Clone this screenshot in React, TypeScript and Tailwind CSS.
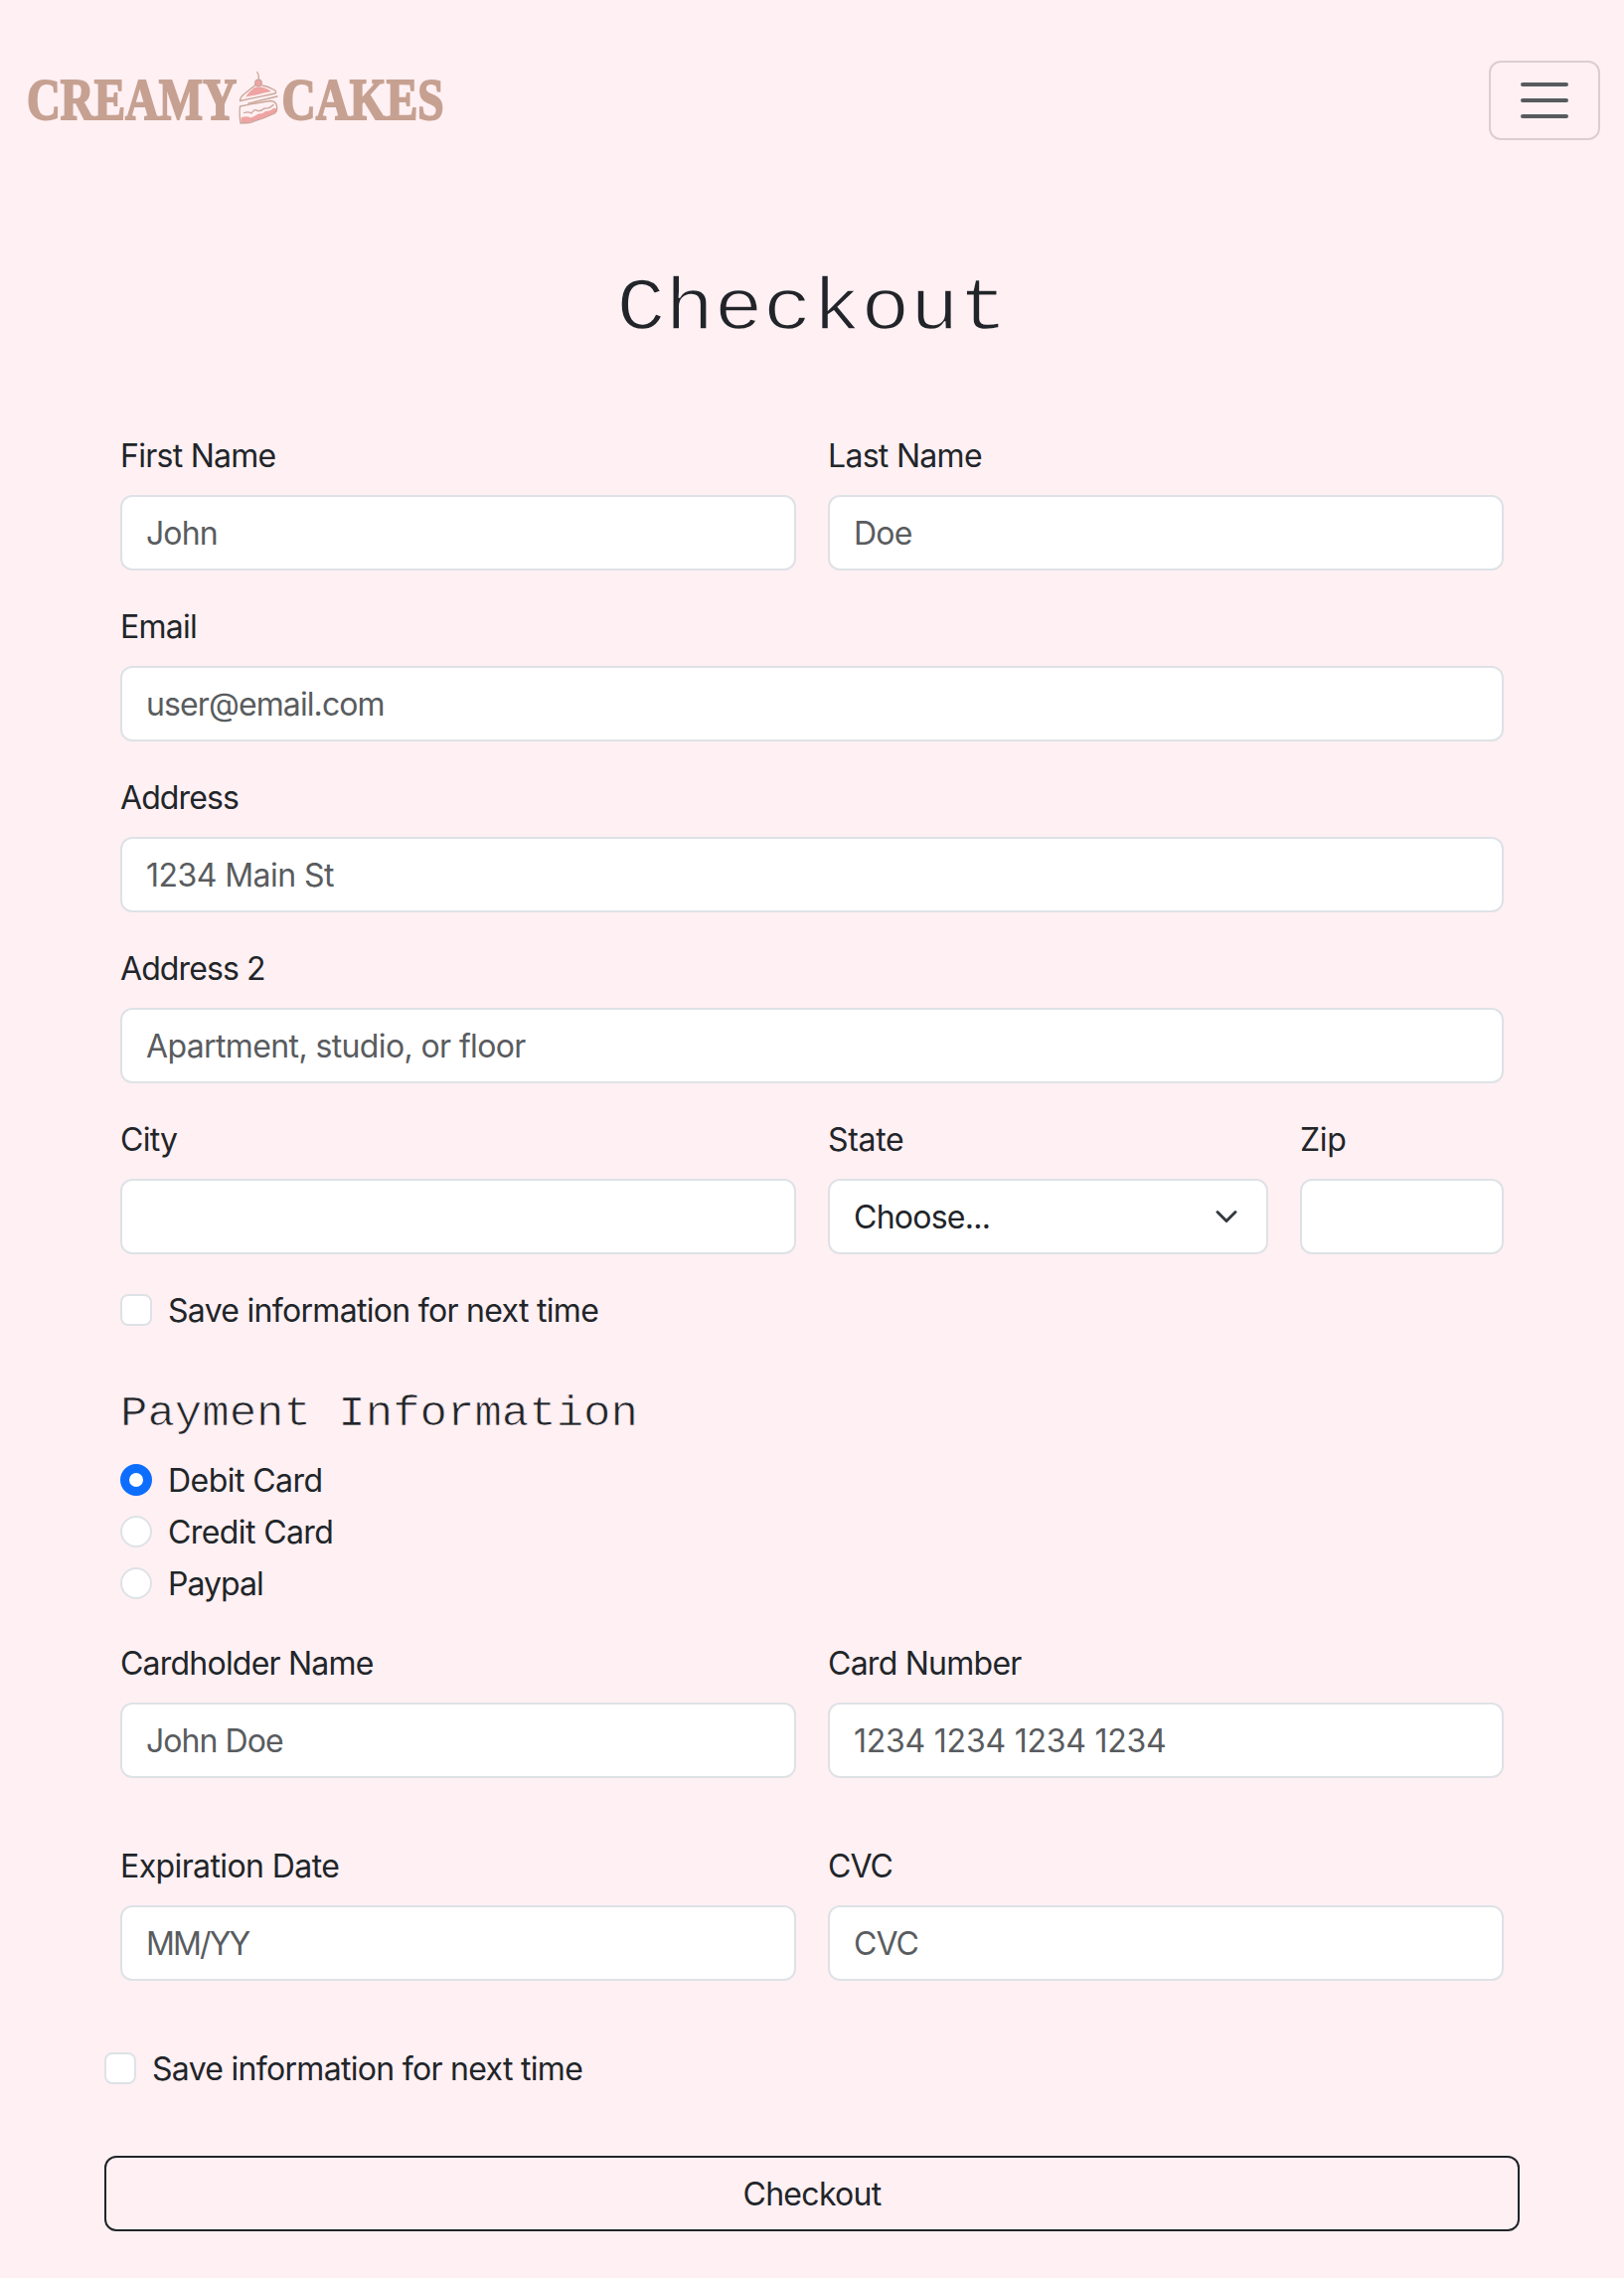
import React from "react";

type FieldProps = { label: string; placeholder?: string; labelClass?: string; inputClass?: string };

function Field({ label, placeholder, labelClass = "", inputClass = "" }: FieldProps) {
  return (
    <label className="flex min-w-0 flex-col gap-4">
      <span className={`h-12 whitespace-nowrap leading-[49px] ${labelClass}`}>{label}</span>
      <input
        type="text"
        placeholder={placeholder}
        className={`h-[76px] w-full rounded-xl border-2 border-[#dee2e6] bg-white px-6 text-[#212529] placeholder:text-[#595c5f] placeholder:opacity-100 ${inputClass}`}
      />
    </label>
  );
}

function Check({ label }: { label: string }) {
  return (
    <label className="flex h-12 items-center gap-4">
      <input type="checkbox" className="size-8 appearance-none rounded-lg border-2 border-[#dee2e6] bg-white" />
      <span className="whitespace-nowrap pt-0.5 leading-[48px] tracking-[-0.7px]">{label}</span>
    </label>
  );
}

function Radio({ label, checked, labelClass }: { label: string; checked?: boolean; labelClass: string }) {
  return (
    <label className="flex h-12 items-center gap-4">
      <input
        type="radio"
        name="payment"
        defaultChecked={checked}
        className="size-8 appearance-none rounded-full border-2 border-[#dee2e6] bg-white checked:border-[9px] checked:border-[#0d6efd]"
      />
      <span className={`whitespace-nowrap pt-px leading-[48px] ${labelClass}`}>{label}</span>
    </label>
  );
}

function Logo() {
  return (
    <svg width="480" height="100" viewBox="0 0 480 100" className="overflow-visible">
      <g fill="#c6a192" stroke="#c6a192" strokeWidth="2" fontFamily="Liberation Serif, serif" fontWeight="700" fontSize="58.5">
        <text x="27" y="69.500" textLength="211" lengthAdjust="spacingAndGlyphs">CREAMY</text>
        <text x="283.500" y="69.500" textLength="163" lengthAdjust="spacingAndGlyphs">CAKES</text>
      </g>
      <g fill="none" stroke="#c9a699" strokeWidth="1.3" strokeLinecap="round" strokeLinejoin="round">
        <path d="M247 47.500 Q250 43 256 38 Q265 36 273 42 Q266 43 258 45.500 Z" fill="#efa3a3" stroke="none" />
        <path d="M257 35.500 L244 46 Q241 49.500 241.500 51.500 L277 44 Q279 42 275 40 Q270 37 264 36" />
        <circle cx="260" cy="33.500" r="3.300" fill="#efa3a3" />
        <path d="M260.300 30 Q261 26 258.800 22.500" />
        <path d="M250 54 L279 47" />
        <path d="M242.500 68.500 Q248 66 252 68.500 Q256 67 260 64.500 Q264 65 267 62 Q272 62 275 59 L278.500 59 V62.500 Q264 71 250 73 L242.500 73.500Z" fill="#efa3a3" stroke="none" />
        <path d="M241.500 57 Q255 54 272 51.500 Q277 52 278 55 Q280 61 276.500 64 Q264 70 251 73.500 L242 74 Q240.500 65 241.500 57 Z" />
        <path d="M245.500 63.500 Q250 62 253 64 Q256 59 259 61.500 Q263 62 266 59 Q270 60 275 55.500" />
      </g>
    </svg>
  );
}

export default function App() {
  return (
    <div className="h-[2292px] w-[1634px] overflow-hidden bg-[#fff0f3] font-['Inter','Liberation_Sans',sans-serif] text-[32px] text-[#212529]">
      <header className="flex h-[202px] items-start justify-between pr-6">
        <div className="pt-[50px]">
          <Logo />
        </div>
        <button type="button" aria-label="Menu" className="mt-[61px] flex h-20 w-28 items-center justify-center rounded-xl border-2 border-[#dccdd0]">
          <svg width="60" height="60" viewBox="0 0 30 30" fill="none" stroke="#585b5e" strokeWidth="2" strokeLinecap="round">
            <path d="M4 7h22M4 15h22M4 23h22" />
          </svg>
        </button>
      </header>
      <main className="px-[105px]">
        <h1 className="mt-[58px] h-24 translate-y-1 scale-y-90 text-center font-['Liberation_Mono',monospace] text-[82px] leading-[96px] [-webkit-text-stroke:1.7px_#fff0f3]">Checkout</h1>
        <form className="px-4 pt-[78px]">
          <div className="grid grid-cols-2 gap-8">
            <Field label="First Name" placeholder="John" labelClass="tracking-[-0.73px]" inputClass="tracking-[-0.9px]" />
            <Field label="Last Name" placeholder="Doe" labelClass="tracking-[-0.7px]" inputClass="tracking-[-0.8px]" />
            <div className="col-span-2">
              <Field label="Email" placeholder="user@email.com" labelClass="tracking-[-0.75px]" inputClass="tracking-[-0.9px]" />
            </div>
            <div className="col-span-2">
              <Field label="Address" placeholder="1234 Main St" labelClass="tracking-[-0.9px]" inputClass="tracking-[-0.55px]" />
            </div>
            <div className="col-span-2">
              <Field label="Address 2" placeholder="Apartment, studio, or floor" labelClass="tracking-[-0.9px]" inputClass="tracking-[-0.62px]" />
            </div>
            <Field label="City" labelClass="tracking-[-0.7px]" />
            <div className="grid grid-cols-[443px_205px] gap-8">
              <div className="flex flex-col gap-4">
                <span className="h-12 leading-[49px] tracking-[-0.3px]">State</span>
                <div className="flex h-[76px] items-center justify-between rounded-xl border-2 border-[#dee2e6] bg-white px-6">
                  <span className="pt-0.5 tracking-[-0.75px]">Choose...</span>
                  <svg width="32" height="24" viewBox="0 0 16 16" fill="none" stroke="#343a40" strokeWidth="2" strokeLinecap="round" strokeLinejoin="round">
                    <path d="m2 5 6 6 6-6" />
                  </svg>
                </div>
              </div>
              <Field label="Zip" labelClass="tracking-[-0.3px]" />
            </div>
          </div>
          <div className="mt-8"><Check label="Save information for next time" /></div>
          <h4 className="mt-[50px] h-[57px] translate-y-[3px] scale-y-92 font-['Liberation_Mono',monospace] text-[45.7px] leading-[56px] [-webkit-text-stroke:0.8px_#fff0f3]">Payment Information</h4>
          <div className="mt-4 flex flex-col gap-1">
            <Radio label="Debit Card" checked labelClass="tracking-[-0.55px]" />
            <Radio label="Credit Card" labelClass="tracking-[-0.6px]" />
            <Radio label="Paypal" labelClass="tracking-[-0.95px]" />
          </div>
          <div className="mt-8 grid grid-cols-2 gap-x-8 gap-y-16">
            <Field label="Cardholder Name" placeholder="John Doe" labelClass="tracking-[-0.78px]" inputClass="tracking-[-0.95px]" />
            <Field label="Card Number" placeholder="1234 1234 1234 1234" labelClass="tracking-[-0.74px]" inputClass="tracking-[-0.23px]" />
            <Field label="Expiration Date" placeholder="MM/YY" labelClass="tracking-[-0.6px]" inputClass="tracking-[-1.9px]" />
            <Field label="CVC" placeholder="CVC" labelClass="tracking-[-0.9px]" inputClass="tracking-[-0.9px]" />
          </div>
        </form>
        <div className="mt-16"><Check label="Save information for next time" /></div>
        <button type="button" className="mt-16 h-[76px] w-full rounded-xl border-2 border-[#212529] pt-px leading-[48px] tracking-[-0.7px]">Checkout</button>
      </main>
    </div>
  );
}
